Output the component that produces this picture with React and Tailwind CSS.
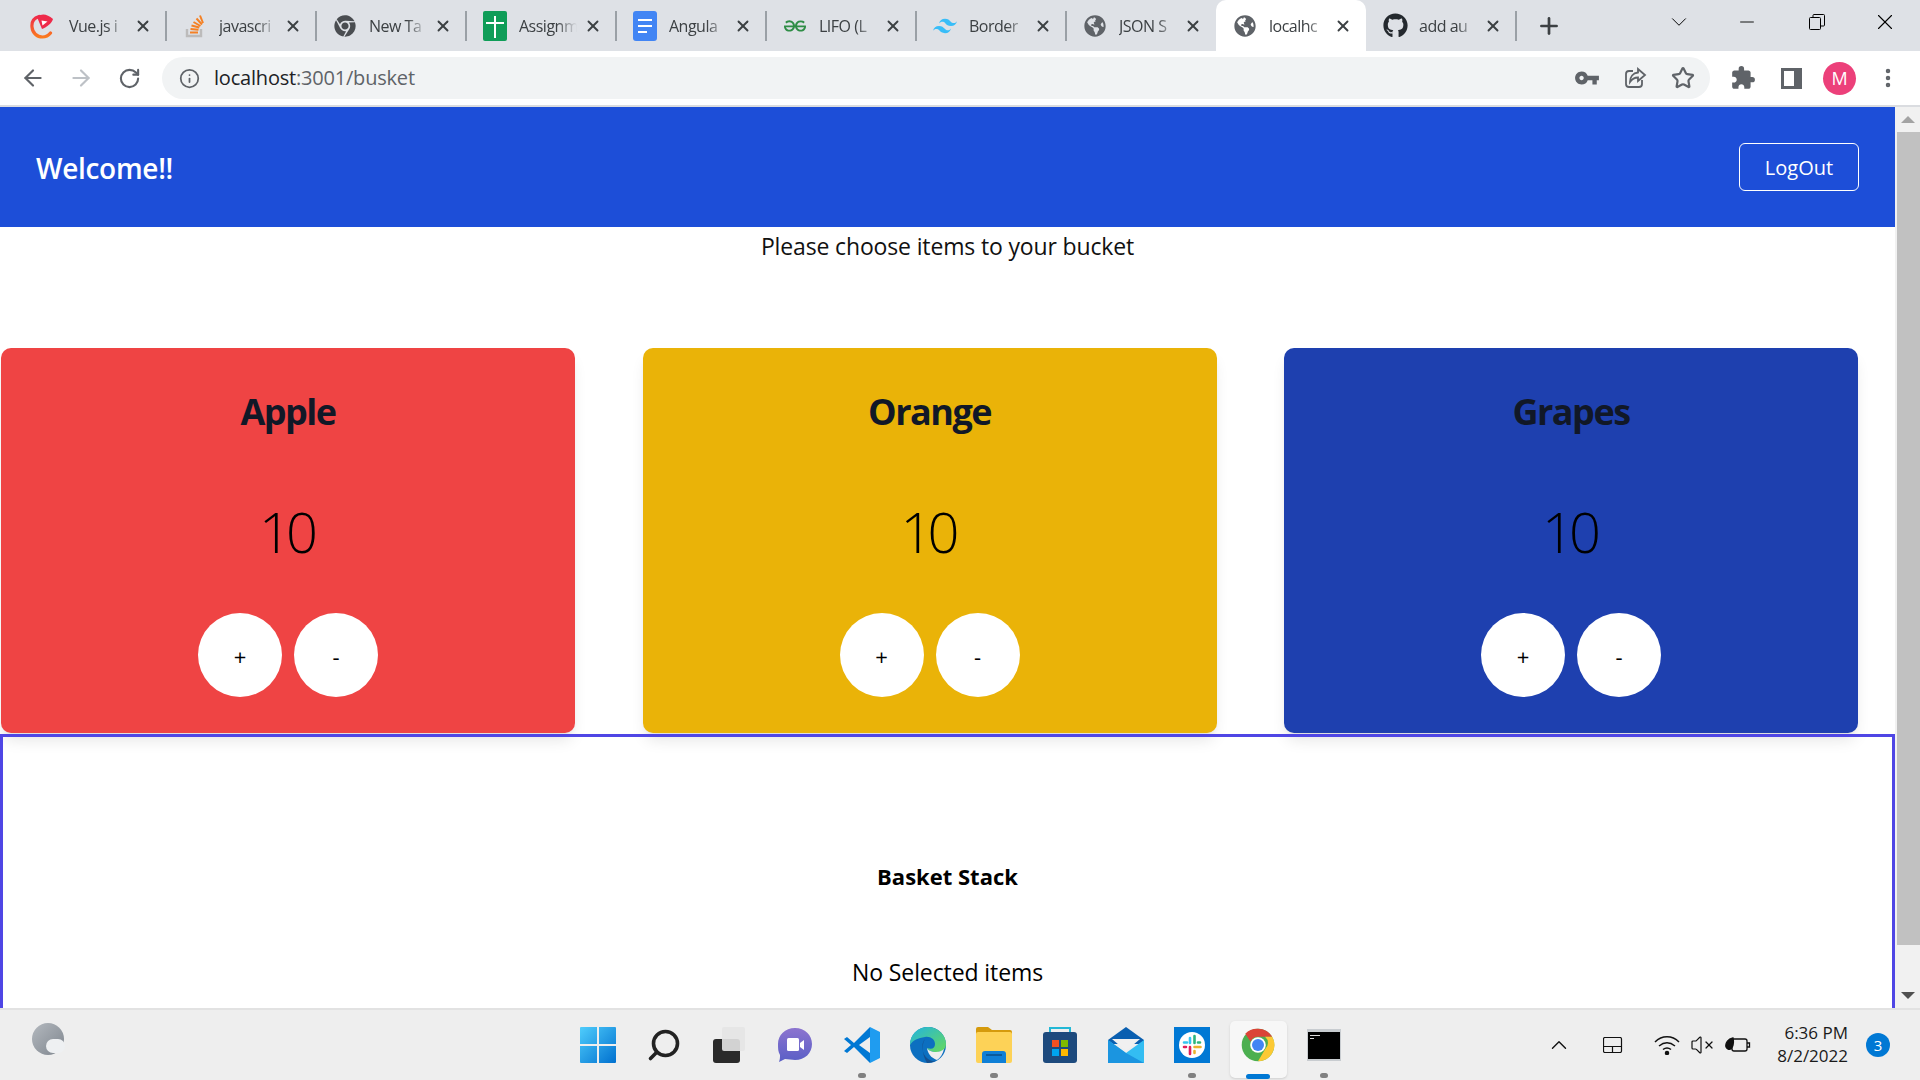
import React from 'react';
import { ArrowLeft, ArrowRight, RotateCw, Info, Star, X, Plus, ChevronDown, Minus, ChevronUp, Search, VolumeX, EllipsisVertical } from 'lucide-react';
import { FaGithub, FaChrome, FaGlobeAmericas } from 'react-icons/fa';
import { SiTailwindcss, SiGeeksforgeeks } from 'react-icons/si';
import { MdVpnKey, MdExtension } from 'react-icons/md';

const VueSchool = () => (
  <svg width="24" height="26" viewBox="0 0 24 26" fill="none" className="-ml-[7px]">
    <defs>
      <linearGradient id="vs" x1="0" y1="0" x2="0" y2="1">
        <stop offset="0" stopColor="#ee2a4a" />
        <stop offset="1" stopColor="#fb7a1e" />
      </linearGradient>
    </defs>
    <path d="M9 3.500C4 5 1.500 9 2 14c.5 6 5 10 10.500 10 3.500 0 6-1.500 8-4" stroke="url(#vs)" strokeWidth="3.200" strokeLinecap="round" />
    <path d="M7 4c5-4 10-3 16 2-1 4-6 8-11 10z" fill="#ee2a4a" />
    <path d="M11.500 7.500l6 1-5 4z" fill="#ffffff" />
  </svg>
);

const StackIcon = () => (
  <svg width="20" height="24" viewBox="0 0 20 24" fill="none">
    <path d="M2 15v7h14v-7" stroke="#bcbbbb" strokeWidth="2.400" />
    <path d="M5 18.500h8M5.500 15l8 .8M6.500 11.500l7.800 2M8.500 8l7 4M11.500 4.500l5.500 6M15 1.500l3 7.500" stroke="#f48024" strokeWidth="2" />
  </svg>
);

const SheetsIcon = () => (
  <div className="relative w-[24px] h-[30px] rounded-[2px] bg-[#0f9d58]">
    <div className="absolute left-[11px] top-[5px] w-[2px] h-[22px] bg-white" />
    <div className="absolute left-[3px] top-[11px] w-[18px] h-[2px] bg-white" />
  </div>
);

const DocsIcon = () => (
  <div className="w-[24px] h-[30px] rounded-[3px] bg-[#4285f4] flex flex-col gap-[4px] pt-[8px] pl-[5px]">
    <div className="w-[14px] h-[2px] bg-white" />
    <div className="w-[14px] h-[2px] bg-white" />
    <div className="w-[9px] h-[2px] bg-white" />
  </div>
);

const tabs = [
  { title: 'Vue.js i', icon: <VueSchool /> },
  { title: 'javascri', icon: <StackIcon /> },
  { title: 'New Ta', icon: <FaChrome size={22} className="text-[#4a4d51]" /> },
  { title: 'Assignm', icon: <SheetsIcon /> },
  { title: 'Angula', icon: <DocsIcon /> },
  { title: 'LIFO (L', icon: <SiGeeksforgeeks size={22} className="text-[#2f8d46]" /> },
  { title: 'Border', icon: <SiTailwindcss size={24} className="text-[#38bdf8]" /> },
  { title: 'JSON S', icon: <FaGlobeAmericas size={22} className="text-[#5f6368]" /> },
  { title: 'localhc', icon: <FaGlobeAmericas size={22} className="text-[#5f6368]" />, active: true },
  { title: 'add au', icon: <FaGithub size={25} className="text-[#24292e]" /> },
];

const items = [
  { name: 'Apple', color: 'bg-[#ef4444]' },
  { name: 'Orange', color: 'bg-[#eab308]' },
  { name: 'Grapes', color: 'bg-[#1e40af]' },
];

function Tab({ tab, hideSep }) {
  return (
    <div className={`relative flex items-center w-[150px] h-[51px] shrink-0 ${tab.active ? 'bg-white rounded-t-[10px]' : ''}`}>
      <div className="w-[58px] flex justify-center shrink-0">{tab.icon}</div>
      <span className="w-[58px] -ml-[5px] overflow-hidden whitespace-nowrap text-[16px] tracking-[-0.5px] text-[#3c4043] [mask-image:linear-gradient(to_right,black_65%,transparent)]">
        {tab.title}
      </span>
      <X size={18} strokeWidth={2.5} className="ml-[7px] text-[#3c4043] shrink-0" />
      {!hideSep && <div className="absolute right-[-1px] top-[11px] h-[30px] w-[2px] bg-[#9aa0a6]" />}
    </div>
  );
}

function TabStrip() {
  return (
    <div className="h-[51px] bg-[#dee1e6] flex items-center pl-[16px] shrink-0">
      {tabs.map((tab, i) => (
        <Tab key={i} tab={tab} hideSep={tab.active || tabs[i + 1]?.active} />
      ))}
      <Plus size={26} strokeWidth={2.5} className="ml-[20px] text-[#3c4043] shrink-0" />
      <div className="ml-auto flex items-center h-full pb-[7px] text-black">
        <ChevronDown size={26} strokeWidth={0.9} className="mr-[44px]" />
        <Minus size={22} strokeWidth={1} className="mr-[51px]" />
        <svg width="16" height="16" viewBox="0 0 16 16" fill="none" stroke="black" className="mr-[47px]">
          <rect x="0.500" y="3.500" width="11" height="12" rx="1" />
          <path d="M4 3V1.500a1 1 0 0 1 1-1h9.500a1 1 0 0 1 1 1V11a1 1 0 0 1-1 1H12" />
        </svg>
        <X size={26} strokeWidth={1} className="mr-[22px]" />
      </div>
    </div>
  );
}

function Toolbar() {
  return (
    <div className="h-[56px] bg-white border-b-[2px] border-[#dadce0] flex items-center shrink-0">
      <ArrowLeft size={26} strokeWidth={2} className="ml-[20px] text-[#5f6368]" />
      <ArrowRight size={26} strokeWidth={2} className="ml-[22px] text-[#bdc1c6]" />
      <RotateCw size={23} strokeWidth={2.2} className="ml-[24px] text-[#5f6368]" />
      <div className="ml-[21px] w-[1548px] h-[42px] rounded-full bg-[#f1f3f4] flex items-center pl-[17px]">
        <Info size={21} strokeWidth={2} className="text-[#5f6368]" />
        <span className="ml-[14px] text-[20px] tracking-[-0.2px] text-[#5f6368]">
          <span className="text-[#202124]">localhost</span>:3001/busket
        </span>
        <div className="ml-auto flex items-center text-[#5f6368]">
          <MdVpnKey size={26} />
          <svg width="24" height="24" viewBox="0 0 24 24" fill="none" stroke="currentColor" strokeWidth="1.800" className="ml-[23px]">
            <path d="M10 5H6a3 3 0 0 0-3 3v10a3 3 0 0 0 3 3h10a3 3 0 0 0 3-3v-4" />
            <path d="M15 3l7 6-7 6v-3.500c-4 0-6 1.500-8 4.500 0-5 3-9 8-9.500z" />
          </svg>
          <Star size={24} strokeWidth={2.2} className="ml-[24px] mr-[15px]" />
        </div>
      </div>
      <MdExtension size={26} className="ml-[20px] text-[#5f6368]" />
      <div className="ml-[25px] w-[21px] h-[21px] border-[3px] border-r-[8px] border-[#5f6368]" />
      <div className="ml-[21px] w-[33px] h-[33px] rounded-full bg-[#ec407a] text-white text-[18px] flex items-center justify-center">M</div>
      <EllipsisVertical size={24} strokeWidth={2.5} className="ml-[20px] text-[#5f6368]" />
    </div>
  );
}

function Card({ item }) {
  return (
    <div className={`w-[574px] h-[385px] rounded-[10px] shadow-lg flex flex-col items-center pt-[40px] text-[#111827] ${item.color}`}>
      <h2 className="text-[36px] leading-[48px] font-bold tracking-[-1.5px]">{item.name}</h2>
      <div className="mt-[55px] pr-[4px] text-[56px] leading-[80px] font-light tracking-[-5px] text-black">10</div>
      <div className="mt-[42px] flex gap-[12px]">
        <button className="w-[84px] h-[84px] rounded-full bg-white text-[22px] pt-[3px] text-black">+</button>
        <button className="w-[84px] h-[84px] rounded-full bg-white text-[22px] pt-[3px] text-black">-</button>
      </div>
    </div>
  );
}

function Page() {
  return (
    <div className="flex-1 flex flex-col overflow-hidden bg-white">
      <header className="h-[120px] shrink-0 bg-[#1d4ed8] flex items-center justify-between pl-[36px] pr-[36px]">
        <h1 className="pt-[2px] text-[28px] font-semibold tracking-[-0.3px] text-white">Welcome!!</h1>
        <button className="w-[120px] h-[48px] pt-[2px] rounded-[6px] border border-white text-[20px] text-white">LogOut</button>
      </header>
      <p className="h-[36px] mt-[1px] text-center text-[23px] leading-[36px] tracking-[-0.15px] text-[#111] shrink-0">Please choose items to your bucket</p>
      <div className="mt-[84px] flex gap-[67.500px] pl-[1px] shrink-0">
        {items.map((item) => <Card key={item.name} item={item} />)}
      </div>
      <section className="mt-[1px] h-[420px] shrink-0 border-[3px] border-[#4f46e5] flex flex-col items-center pt-[121px] text-black">
        <h3 className="text-[22px] leading-[36px] font-bold">Basket Stack</h3>
        <p className="mt-[60px] text-[23px] leading-[36px] tracking-[-0.1px]">No Selected items</p>
      </section>
    </div>
  );
}

function Scrollbar() {
  return (
    <div className="w-[25px] shrink-0 bg-[#f1f1f1] flex flex-col items-center">
      <div className="h-[25px] flex items-center justify-center">
        <div className="w-0 h-0 border-x-[7px] border-x-transparent border-b-[7px] border-b-[#a3a3a3]" />
      </div>
      <div className="w-[23px] h-[813px] ml-[1px] bg-[#c1c1c1]" />
      <div className="mt-auto h-[25px] flex items-center justify-center">
        <div className="w-0 h-0 border-x-[7px] border-x-transparent border-t-[7px] border-t-[#505050]" />
      </div>
    </div>
  );
}

const Win = () => (
  <svg width="36" height="36" viewBox="0 0 36 36">
    <defs>
      <linearGradient id="win" x1="0" y1="0" x2="1" y2="1">
        <stop offset="0" stopColor="#4fcdfc" />
        <stop offset="1" stopColor="#0070cf" />
      </linearGradient>
    </defs>
    <path d="M0 1a1 1 0 0 1 1-1h16v17H0zM19 0h16a1 1 0 0 1 1 1v16H19zM0 19h17v17H1a1 1 0 0 1-1-1zM19 19h17v16a1 1 0 0 1-1 1H19z" fill="url(#win)" />
  </svg>
);

const TaskView = () => (
  <svg width="32" height="36" viewBox="0 0 32 36" className="-ml-[3px]">
    <rect x="0" y="12" width="27" height="24" rx="3" fill="#2a2a2a" />
    <rect x="9" y="0" width="23" height="24" rx="2" fill="#e4e4e4" opacity="0.9" />
  </svg>
);

const Teams = () => (
  <svg width="36" height="36" viewBox="0 0 36 36" className="-ml-[2px]">
    <defs>
      <linearGradient id="teams" x1="0" y1="0" x2="0" y2="1">
        <stop offset="0" stopColor="#8c74cf" />
        <stop offset="1" stopColor="#5a5fc6" />
      </linearGradient>
    </defs>
    <path d="M18 1c10 0 17 7 17 16s-7 16-17 16c-3 0-7-1-10-1l-6 3c1-3 1-5 1-7-2-3-2-7-2-11C1 8 8 1 18 1z" fill="url(#teams)" />
    <rect x="10" y="11" width="12" height="13" rx="1.500" fill="white" />
    <path d="M23 16l4-3v10l-4-3z" fill="white" />
  </svg>
);

const VsCode = () => (
  <svg width="36" height="36" viewBox="0 0 36 36">
    <path d="M26 0l10 5v26l-10 5V0z" fill="#1f9cf0" />
    <path d="M26 0L10 16 3 10 0 12l7 6-7 6 3 2 7-6 16 16V26L15 18 26 10z" fill="#0078d4" />
  </svg>
);

const Edge = () => (
  <svg width="36" height="36" viewBox="0 0 36 36">
    <defs>
      <linearGradient id="edge" x1="0" y1="0" x2="1" y2="1">
        <stop offset="0" stopColor="#22b4e0" />
        <stop offset="1" stopColor="#66d95c" />
      </linearGradient>
    </defs>
    <circle cx="18" cy="18" r="18" fill="#0c6fc0" />
    <path d="M0 18C0 7 8 0 18 0c10 0 18 8 18 17 0 6-5 8-10 8-5 0-8-2-9-4 5 2 8 0 8-4 0-5-5-8-10-7C8 11 3 13 0 18z" fill="url(#edge)" />
    <path d="M17 21c1 2 4 4 9 4 3 0 6-1 8-3-1 5-4 9-7 11-3-1-9-4-10-12z" fill="#eeeeee" />
    <path d="M15 12c-4 4-4 15 3 20 3 2 6 3 9 1-3 2-7 3-10 3-3-5-7-16-2-24z" fill="#15508f" />
  </svg>
);

const Files = () => (
  <svg width="36" height="36" viewBox="0 0 36 36">
    <path d="M0 2a2 2 0 0 1 2-2h10l4 3h18a2 2 0 0 1 2 2v4H0z" fill="#d59a0c" />
    <rect x="0" y="5" width="36" height="31" rx="2" fill="#fdd257" />
    <path d="M6 36v-9a3 3 0 0 1 3-3h18a3 3 0 0 1 3 3v9z" fill="#0f7fd6" />
    <rect x="10" y="27" width="16" height="2" fill="#0a5a9c" />
  </svg>
);

const Store = () => (
  <svg width="36" height="36" viewBox="0 0 36 36">
    <path d="M8 6V1h20v5" fill="none" stroke="#22b8d6" strokeWidth="2" />
    <rect x="1" y="5" width="34" height="31" rx="3" fill="#1d4a7d" />
    <rect x="10" y="13" width="7" height="7" fill="#f25022" />
    <rect x="19" y="13" width="7" height="7" fill="#7fba00" />
    <rect x="10" y="22" width="7" height="7" fill="#00a4ef" />
    <rect x="19" y="22" width="7" height="7" fill="#ffb900" />
  </svg>
);

const Mail = () => (
  <svg width="36" height="36" viewBox="0 0 36 36">
    <path d="M0 13L18 0l18 13v4H0z" fill="#0a5fb0" />
    <path d="M4 12h28l-14 12z" fill="#f0f0f0" />
    <path d="M0 13l18 13 18-13v23H0z" fill="#33bdf2" />
    <path d="M0 36V13l18 13 18 10z" fill="#1b95e0" />
  </svg>
);

const Slack = () => (
  <svg width="36" height="36" viewBox="0 0 36 36">
    <rect width="36" height="36" fill="#0078d4" />
    <circle cx="18" cy="18" r="13" fill="white" />
    <path d="M16 11v5M10 15.500h3" stroke="#36c5f0" strokeWidth="2.600" strokeLinecap="round" />
    <path d="M20.500 9v7M24 15.500h2" stroke="#2eb67d" strokeWidth="2.600" strokeLinecap="round" />
    <path d="M20.500 24v2M20.500 20h6" stroke="#ecb22e" strokeWidth="2.600" strokeLinecap="round" />
    <path d="M16 20v7M10 20h2" stroke="#e01e5a" strokeWidth="2.600" strokeLinecap="round" />
  </svg>
);

const Chrome = () => (
  <svg width="34" height="34" viewBox="0 0 48 48">
    <circle cx="24" cy="24" r="23" fill="#4caf50" />
    <path d="M24 1a23 23 0 0 1 20 11.500H24a11.500 11.500 0 0 0-10.500 7L6 8A23 23 0 0 1 24 1z" fill="#db4437" />
    <path d="M44 12.500A23 23 0 0 1 24 47l10-17a11.500 11.500 0 0 0 0-17.500z" fill="#fcc934" />
    <circle cx="24" cy="24" r="11" fill="white" />
    <circle cx="24" cy="24" r="8.500" fill="#4285f4" />
  </svg>
);

const Terminal = () => (
  <div className="w-[34px] h-[32px] bg-[#c8ccd0] flex flex-col px-[1px] pt-[3px] pb-[2px]">
    <div className="flex-1 bg-black pl-[2px] pt-[3px]">
      <div className="w-[10px] h-[1px] bg-[#ddd]" />
      <div className="w-[4px] h-[1px] mt-[2px] bg-[#ddd]" />
    </div>
  </div>
);

const dock = [
  { icon: <Win /> },
  { icon: <Search size={36} strokeWidth={2.4} className="text-[#222] -scale-x-100" /> },
  { icon: <TaskView /> },
  { icon: <Teams /> },
  { icon: <VsCode />, dot: true },
  { icon: <Edge /> },
  { icon: <Files />, dot: true },
  { icon: <Store /> },
  { icon: <Mail /> },
  { icon: <Slack />, dot: true },
  { icon: <Chrome />, active: true },
  { icon: <Terminal />, dot: true },
];

function Taskbar() {
  return (
    <div className="relative h-[72px] shrink-0 bg-[#eeeeee] border-t-[2px] border-[#e2e2e2] flex items-center">
      {/* weather */}
      <div className="absolute left-[32px] top-[13px] w-[32px] h-[32px] rounded-full bg-gradient-to-br from-[#b4b9bf] to-[#7f868e]">
        <div className="absolute left-[14px] top-[16px] w-[19px] h-[14px] rounded-full bg-[#eef0f2]" />
      </div>
      <div className="ml-[565px] flex">
        {dock.map((d, i) => (
          <div key={i} className="relative w-[66px] h-[62px] flex items-center justify-center">
            {d.active && <div className="absolute left-[5px] top-[7px] w-[57px] h-[57px] bg-[#f7f7f7] rounded-[5px] shadow-sm" />}
            <div className="relative flex">{d.icon}</div>
            {d.dot && <div className="absolute bottom-[-2px] w-[8px] h-[5px] rounded-full bg-[#808080]" />}
            {d.active && <div className="absolute bottom-[-3px] w-[24px] h-[5px] rounded-full bg-[#0078d4]" />}
          </div>
        ))}
      </div>
      <div className="ml-auto flex items-center text-[#111]">
        <ChevronUp size={26} strokeWidth={1.300} />
        <svg width="20" height="16" viewBox="0 0 20 16" fill="none" stroke="#111" strokeWidth="1.200" className="ml-[31px]">
          <rect x="0.500" y="0.500" width="18" height="15" rx="1.500" />
          <path d="M0.500 9.500h18M9.500 9.500v6" />
        </svg>
        <svg width="26" height="20" viewBox="0 0 26 20" fill="none" stroke="#111" strokeWidth="1.500" className="ml-[31px]">
          <path d="M1 7c7-7 17-7 24 0M5 11c5-4 11-4 16 0M9 14.500c2.500-2 5.500-2 8 0" />
          <circle cx="13" cy="18" r="1.500" fill="#111" />
        </svg>
        <VolumeX size={24} strokeWidth={1.200} className="ml-[10px]" />
        <svg width="26" height="16" viewBox="0 0 26 16" fill="none" stroke="#111" strokeWidth="1.300" className="ml-[11px]">
          <rect x="7" y="2" width="15" height="12" rx="2" />
          <path d="M22 6h2.500v4H22" />
          <path d="M8 1C3 2 0 6 1 10c1 2 3 3 5 2 2-2 3-6 2-11z" fill="#111" />
        </svg>
        <div className="ml-[15px] w-[82px] flex flex-col items-end text-[17px] leading-[23px] text-[#1a1a1a]">
          <span className="-mt-[2px]">6:36 PM</span>
          <span>8/2/2022</span>
        </div>
        <div className="ml-[18px] mr-[30px] w-[24px] h-[24px] rounded-full bg-[#0078d4] text-white text-[15px] flex items-center justify-center">3</div>
      </div>
    </div>
  );
}

function App() {
  return (
    <div className="w-[1920px] h-[1080px] overflow-hidden flex flex-col font-['Open_Sans','Noto_Sans',sans-serif]">
      <TabStrip />
      <Toolbar />
      <div className="flex-1 flex min-h-0">
        <Page />
        <Scrollbar />
      </div>
      <Taskbar />
    </div>
  );
}

export default App;
